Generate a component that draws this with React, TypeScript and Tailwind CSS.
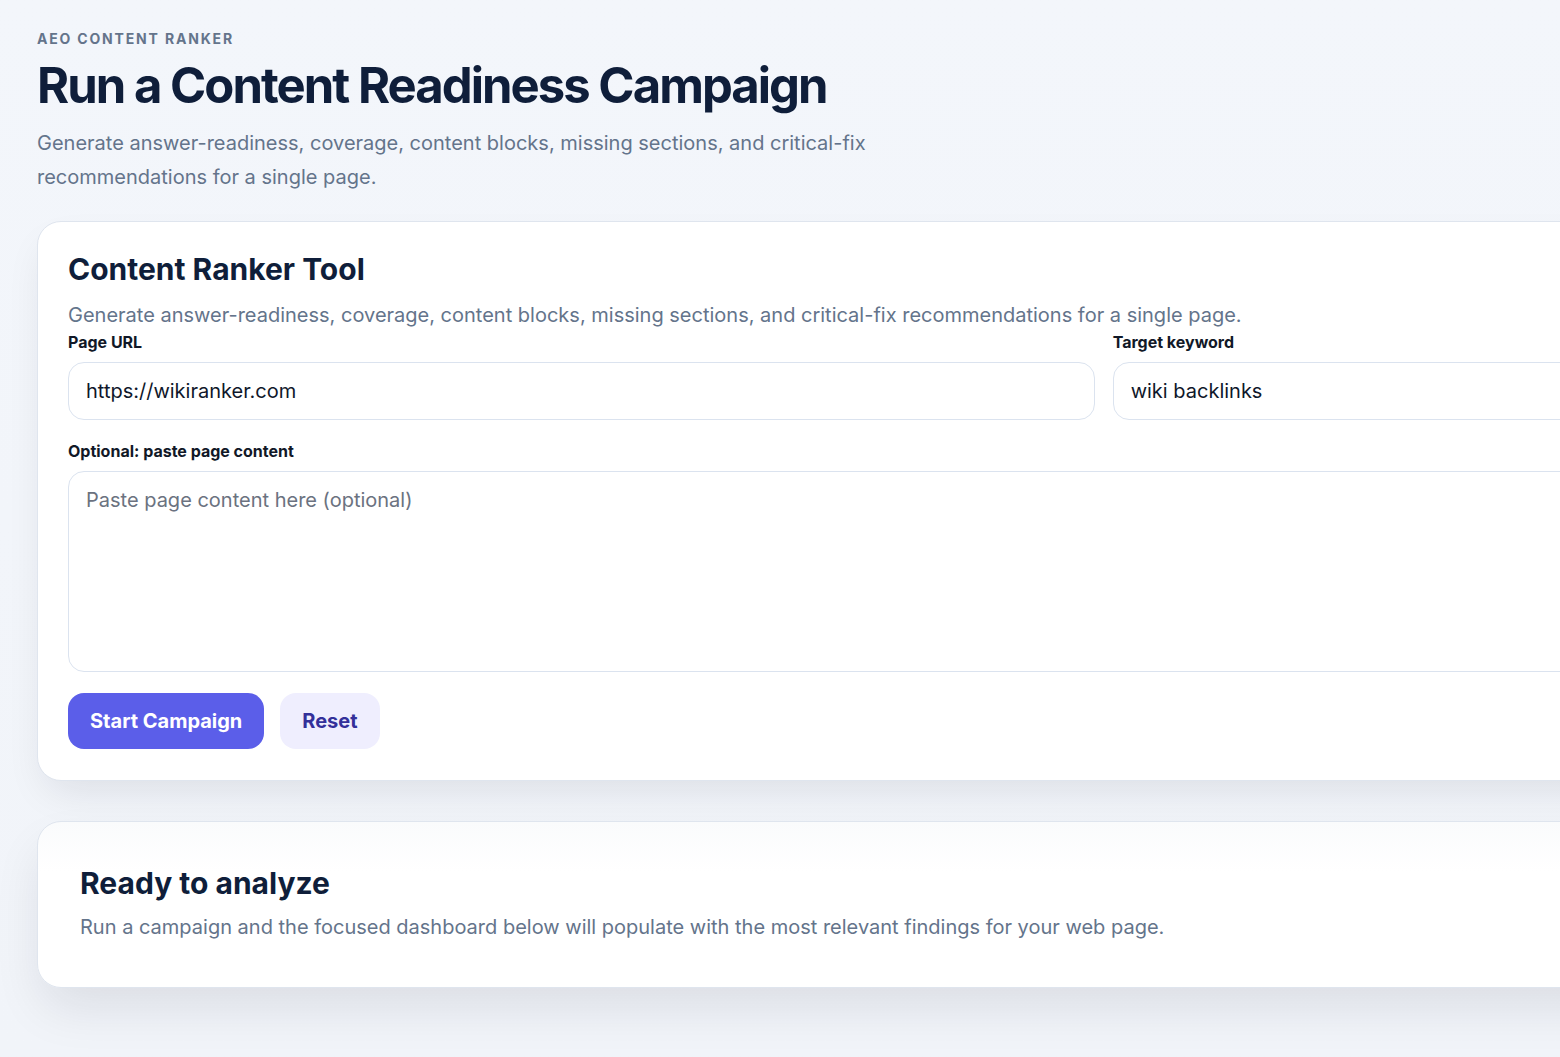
import React from "react";

export default function App() {
  return (
    <div
      className="min-h-screen w-full overflow-hidden bg-gradient-to-b from-[#f3f6fb] to-[#f1f4f9] text-[#0f172a]"
      style={{ fontFamily: "Inter, 'Noto Sans', sans-serif" }}
    >
      <div className="pl-[37px] pt-[30px] pb-[70px]">
        <div className="text-[14px] font-bold uppercase tracking-[0.13em] leading-[18px] text-[#64748b]">
          AEO Content Ranker
        </div>
        <h1 className="mt-[10px] text-[49px] font-bold leading-[56px] tracking-[-0.04em] text-[#0f1e3a]">
          Run a Content Readiness Campaign
        </h1>
        <p className="mt-[12px] max-w-[860px] text-[20px] leading-[34px] text-[#64748b]">
          Generate answer-readiness, coverage, content blocks, missing sections, and critical-fix recommendations for a single page.
        </p>

        <div className="mt-[27px] w-[1620px] rounded-[24px] border border-[#dfe5ee] bg-white px-[30px] pt-[29px] pb-[31px] shadow-[0_18px_40px_-10px_rgba(15,23,42,0.10)]">
          <h2 className="text-[30px] font-bold leading-[36px] text-[#0f1e3a]">
            Content Ranker Tool
          </h2>
          <p className="mt-[14px] text-[20px] leading-[28px] text-[#64748b]">
            Generate answer-readiness, coverage, content blocks, missing sections, and critical-fix recommendations for a single page.
          </p>
          <div className="mt-[1px] grid grid-cols-[2fr_1fr] gap-x-[18px] gap-y-[19px]">
            <label className="flex flex-col gap-[8px]">
              <span className="text-[16px] font-bold leading-[24px] text-[#111827]">Page URL</span>
              <input
                readOnly
                value="https://wikiranker.com"
                className="h-[58px] rounded-[16px] border border-[#dbe3ef] bg-white px-[17px] text-[20px] text-[#0f172a] outline-none"
              />
            </label>
            <label className="flex flex-col gap-[8px]">
              <span className="text-[16px] font-bold leading-[24px] text-[#111827]">Target keyword</span>
              <input
                readOnly
                value="wiki backlinks"
                className="h-[58px] rounded-[16px] border border-[#dbe3ef] bg-white px-[17px] text-[20px] text-[#0f172a] outline-none"
              />
            </label>
            <label className="col-span-2 flex flex-col gap-[8px]">
              <span className="text-[16px] font-bold leading-[24px] text-[#111827]">Optional: paste page content</span>
              <textarea
                readOnly
                placeholder="Paste page content here (optional)"
                className="h-[201px] resize-none rounded-[16px] border border-[#dbe3ef] bg-white px-[17px] py-[14px] text-[20px] leading-[28px] text-[#0f172a] placeholder:text-[#6b7280] outline-none"
              />
            </label>
          </div>
          <div className="mt-[21px] flex gap-[16px]">
            <button className="h-[56px] rounded-[16px] bg-[#5b5ee9] px-[22px] text-[20px] font-bold text-white">
              Start Campaign
            </button>
            <button className="h-[56px] rounded-[16px] bg-[#efeefe] px-[22px] text-[20px] font-bold text-[#33309a]">
              Reset
            </button>
          </div>
        </div>

        <div className="mt-[40px] w-[1620px] rounded-[24px] border border-[#dfe5ee] bg-gradient-to-b from-[#fafbfc] to-white to-[30%] px-[42px] pt-[43px] pb-[46px] shadow-[0_24px_50px_-6px_rgba(15,23,42,0.10)]">
          <h2 className="text-[30px] font-bold leading-[36px] text-[#0f1e3a]">
            Ready to analyze
          </h2>
          <p className="mt-[12px] text-[20px] leading-[28px] text-[#64748b]">
            Run a campaign and the focused dashboard below will populate with the most relevant findings for your web page.
          </p>
        </div>
      </div>
    </div>
  );
}
